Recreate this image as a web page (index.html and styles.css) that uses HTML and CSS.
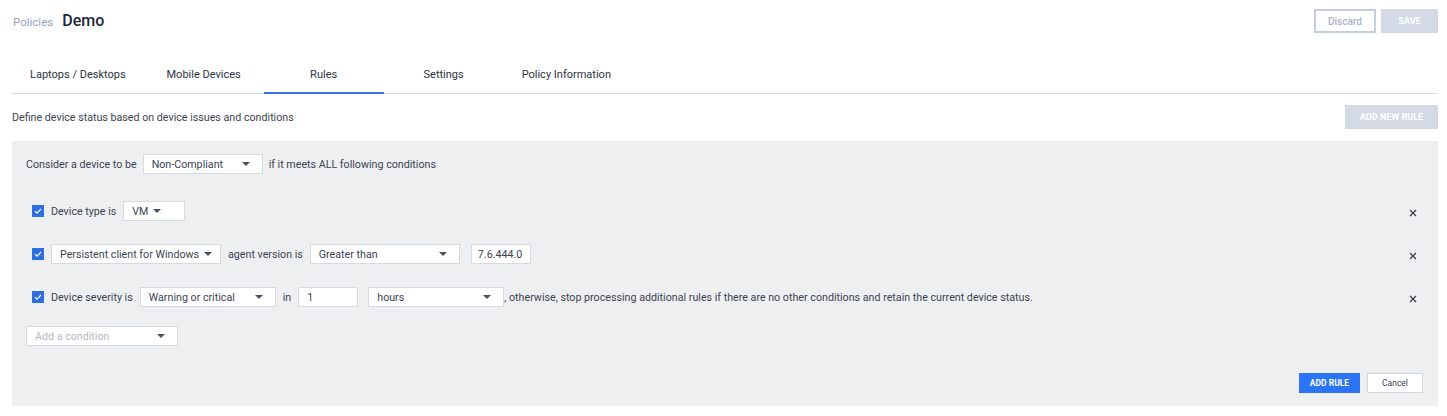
FILE: index.html
```html
<!DOCTYPE html>
<html>
<head>
<meta charset="utf-8">
<link rel="stylesheet" href="styles.css">
</head>
<body>
<div class="page">
  <header class="top">
    <div class="crumbs"><span class="crumb">Policies</span><span class="title">Demo</span></div>
    <div class="top-actions">
      <button class="btn-outline">Discard</button>
      <button class="btn-disabled save">SAVE</button>
    </div>
  </header>
  <nav class="tabs">
    <div class="tab">Laptops / Desktops</div>
    <div class="tab">Mobile Devices</div>
    <div class="tab active">Rules</div>
    <div class="tab">Settings</div>
    <div class="tab">Policy Information</div>
  </nav>
  <div class="intro">
    <span>Define device status based on device issues and conditions</span>
    <button class="btn-disabled addnew">ADD NEW RULE</button>
  </div>
  <section class="panel">
    <div class="consider">
      <span>Consider a device to be</span>
      <div class="sel w-nc"><span>Non-Compliant</span><i class="caret"></i></div>
      <span>if it meets ALL following conditions</span>
    </div>
    <div class="conds">
      <div class="cond">
        <div class="cond-main">
          <span class="cb"><svg viewBox="0 0 12 12" width="12" height="12"><path d="M3 6.2 L5.1 8.2 L9 3.8" fill="none" stroke="#fff" stroke-width="1.2"/></svg></span>
          <span>Device type is</span>
          <div class="sel w-vm tight"><span>VM</span><i class="caret"></i></div>
        </div>
        <span class="x"><svg viewBox="0 0 8 8" width="8" height="8"><path d="M1 1 L7 7 M7 1 L1 7" stroke="#333a45" stroke-width="1.2"/></svg></span>
      </div>
      <div class="cond">
        <div class="cond-main">
          <span class="cb"><svg viewBox="0 0 12 12" width="12" height="12"><path d="M3 6.2 L5.1 8.2 L9 3.8" fill="none" stroke="#fff" stroke-width="1.2"/></svg></span>
          <div class="sel w-pc tight"><span>Persistent client for Windows</span><i class="caret"></i></div>
          <span>agent version is</span>
          <div class="sel w-gt"><span>Greater than</span><i class="caret"></i></div>
          <div class="inp w-ver">7.6.444.0</div>
        </div>
        <span class="x"><svg viewBox="0 0 8 8" width="8" height="8"><path d="M1 1 L7 7 M7 1 L1 7" stroke="#333a45" stroke-width="1.2"/></svg></span>
      </div>
      <div class="cond">
        <div class="cond-main">
          <span class="cb"><svg viewBox="0 0 12 12" width="12" height="12"><path d="M3 6.2 L5.1 8.2 L9 3.8" fill="none" stroke="#fff" stroke-width="1.2"/></svg></span>
          <span>Device severity is</span>
          <div class="sel w-wc"><span>Warning or critical</span><i class="caret"></i></div>
          <span>in</span>
          <div class="inp w-one">1</div>
          <div class="sel w-hr"><span>hours</span><i class="caret"></i></div>
          <span class="tail">, otherwise, stop processing additional rules if there are no other conditions and retain the current device status.</span>
        </div>
        <span class="x"><svg viewBox="0 0 8 8" width="8" height="8"><path d="M1 1 L7 7 M7 1 L1 7" stroke="#333a45" stroke-width="1.2"/></svg></span>
      </div>
    </div>
    <div class="sel w-add placeholder"><span>Add a condition</span><i class="caret"></i></div>
    <div class="panel-actions">
      <button class="btn-primary">ADD RULE</button>
      <button class="btn-cancel">Cancel</button>
    </div>
  </section>
</div>
</body>
</html>
```

FILE: styles.css
```css
* { box-sizing: border-box; }
html, body { margin: 0; padding: 0; background: #fff; }
body {
  font-family: Roboto, "Liberation Sans", sans-serif;
  font-size: 10.7px;
  color: #3b4452;
}
.page { padding: 0 9px 0 12px; width: 1447px; }
button { font-family: inherit; cursor: pointer; }
.cond-main, .consider, .intro, .tab, .sel, .inp { white-space: nowrap; }

.top {
  display: flex;
  justify-content: space-between;
  align-items: flex-start;
  height: 51px;
  padding-top: 9px;
}
.crumbs { display: flex; align-items: baseline; padding-top: 2px; padding-left: 1px; }
.crumb { color: #94a3bd; font-size: 11.5px; margin-right: 9px; }
.title { color: #1d2636; font-size: 16px; font-weight: 500; }
.top-actions { display: flex; gap: 5px; }
.btn-outline {
  width: 62px; height: 24px;
  background: #fff;
  border: 2px solid #c3cee0;
  color: #a9b5c8;
  font-size: 10px;
  font-weight: 500;
}
.btn-disabled {
  background: #d3dae6;
  border: none;
  color: #fff;
  font-size: 9px;
  font-weight: 700;
}
.save { width: 57px; height: 24px; }

.tabs {
  display: flex;
  height: 43px;
  border-bottom: 1px solid #d6dae3;
}
.tab {
  min-width: 120px;
  padding: 17px 18px 0 18px;
  text-align: center;
  height: 42px;
  color: #2b3442;
  font-size: 11px;
  line-height: 13px;
}
.tab.active { border-bottom: 2px solid #3b74d8; height: 43px; margin-bottom: -1px; }

.intro {
  display: flex;
  justify-content: space-between;
  align-items: center;
  height: 47px;
  padding-top: 11px;
  padding-bottom: 12px;
}
.addnew { width: 93px; height: 24px; margin-right: 0; }

.panel {
  background: #eeeff1;
  height: 265px;
  padding: 13px 14px 0 14px;
  display: flex;
  flex-direction: column;
}
.consider { display: flex; align-items: center; gap: 6px; height: 20px; }
.conds { margin-top: 27px; display: flex; flex-direction: column; gap: 23px; }
.cond { display: flex; align-items: center; justify-content: space-between; height: 20px; padding-left: 6px; }
.cond-main { display: flex; align-items: center; gap: 7px; }
.cb {
  width: 12px; height: 12px;
  background: #2e6ee0;
  display: inline-flex;
}
.x { display: inline-flex; margin-right: 7px; margin-top: 3px; }

.sel, .inp {
  height: 20px;
  background: #fff;
  border: 1px solid #d6dae2;
  display: flex;
  align-items: center;
  padding: 0 8px;
  color: #3b4452;
}
.sel { justify-content: space-between; }
.sel.tight { justify-content: flex-start; gap: 5px; }
.caret {
  width: 0; height: 0;
  border-left: 4px solid transparent;
  border-right: 4px solid transparent;
  border-top: 4px solid #4a5260;
  margin-right: 4px;
}
.tight .caret { margin-right: 0; }
.w-nc { width: 120px; }
.w-vm { width: 62px; }
.w-pc { width: 170px; }
.w-gt { width: 150px; }
.w-ver { width: 60px; margin-left: 4px; padding: 0 6px; }
.w-wc { width: 136px; }
.w-one { width: 60px; }
.w-hr { width: 136px; margin-left: 3px; }
.tail { margin-left: -7px; }
.w-add { width: 152px; margin-top: 19px; }
.placeholder span { color: #b2b8c2; }

.panel-actions {
  display: flex;
  justify-content: flex-end;
  gap: 7px;
  margin-top: 27px;
  margin-right: 1px;
}
.btn-primary {
  width: 61px; height: 20px;
  background: #2a74f5;
  border: none;
  color: #fff;
  font-size: 8.5px;
  font-weight: 700;
}
.btn-cancel {
  width: 56px; height: 20px;
  background: #fff;
  border: 1px solid #d0d6e0;
  color: #3b4452;
  font-size: 8.5px;
}
```
